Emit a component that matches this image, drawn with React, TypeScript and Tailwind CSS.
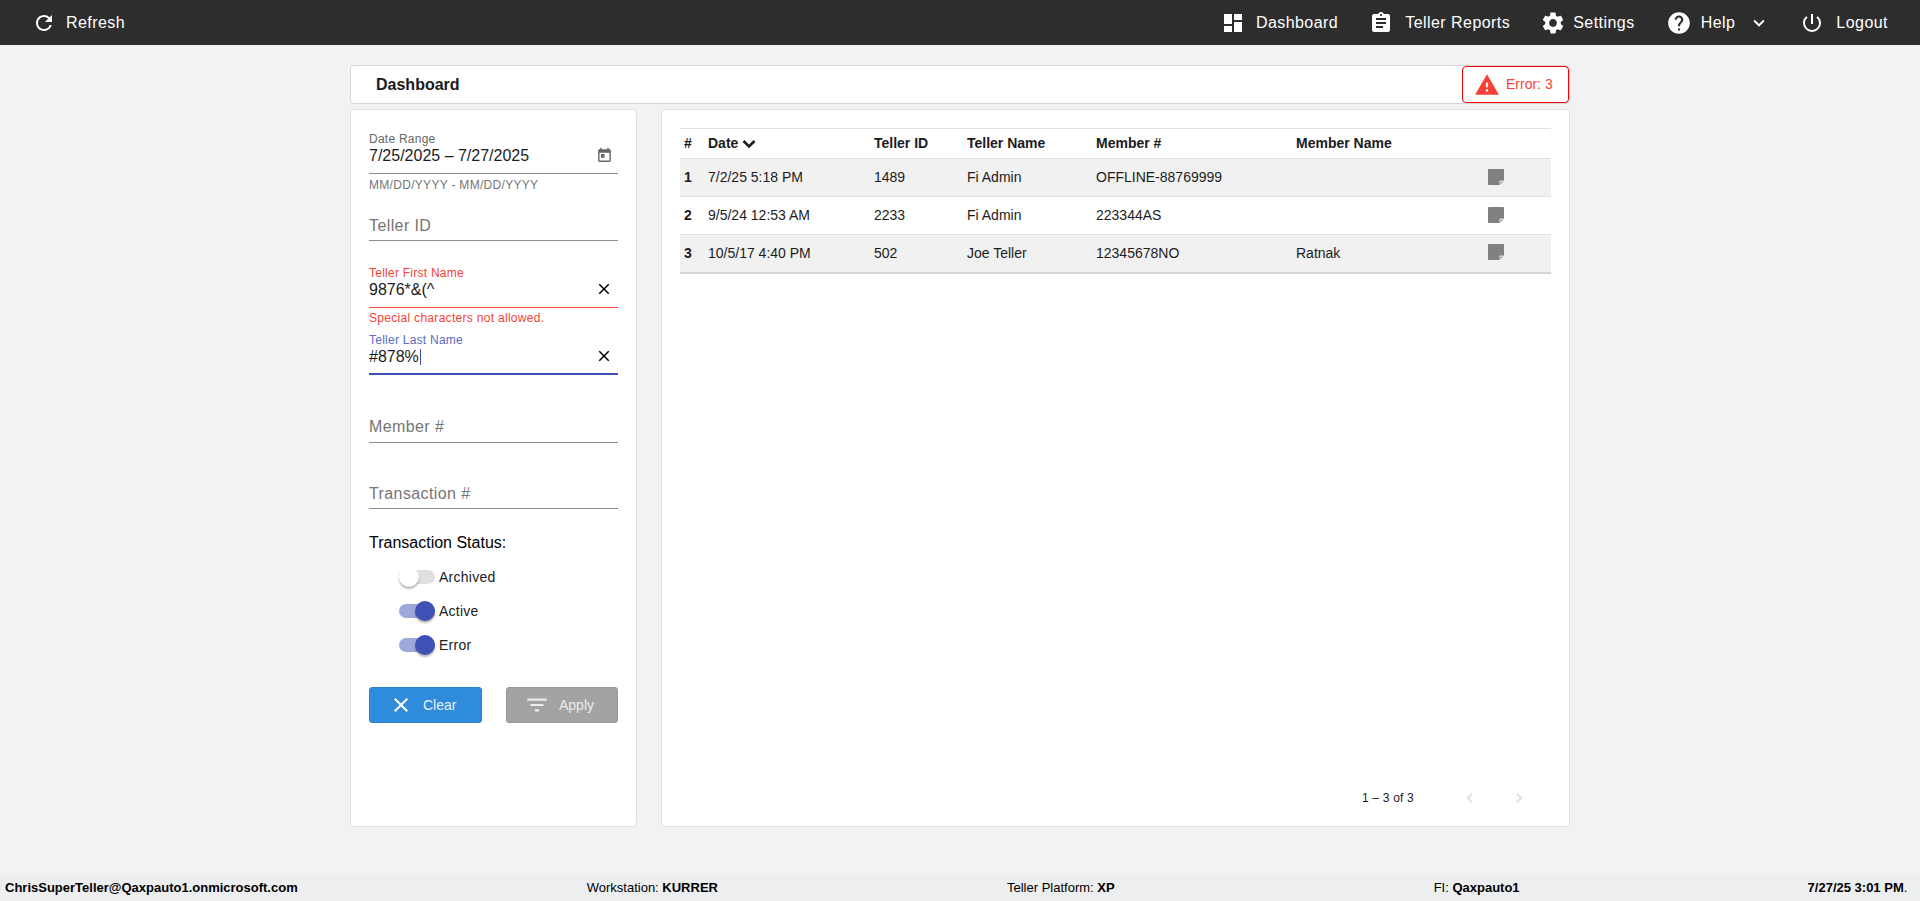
import React from 'react';
import {
  MdRefresh,
  MdDashboard,
  MdAssignment,
  MdSettings,
  MdHelp,
  MdExpandMore,
  MdPowerSettingsNew,
  MdWarning,
  MdToday,
  MdClose,
  MdFilterList,
  MdChevronLeft,
  MdChevronRight,
} from 'react-icons/md';

const ROWS = [
  { n: 1, date: '7/2/25 5:18 PM', id: '1489', teller: 'Fi Admin', member: 'OFFLINE-88769999', name: '' },
  { n: 2, date: '9/5/24 12:53 AM', id: '2233', teller: 'Fi Admin', member: '223344AS', name: '' },
  { n: 3, date: '10/5/17 4:40 PM', id: '502', teller: 'Joe Teller', member: '12345678NO', name: 'Ratnak' },
];

const NoteIcon = () => (
  <svg width="16" height="16" viewBox="0 0 16 16" className="mb-[2px] block">
    <path d="M1 0h14a1 1 0 0 1 1 1v10.5L11.5 16H1a1 1 0 0 1-1-1V1a1 1 0 0 1 1-1z" fill="#808080" />
    <path d="M11.5 16v-4.5H16z" fill="#e8e8e8" />
    <path d="M12.5 15v-2.2h2.2z" fill="#808080" />
  </svg>
);

const NavItem = ({ icon, label, className }: { icon: React.ReactNode; label: string; className: string }) => (
  <div className={`flex items-center ${className}`}>
    {icon}
    <span>{label}</span>
  </div>
);

const PlainField = ({ label, className }: { label: string; className: string }) => (
  <div className={`border-b border-[#8c8c8c] pt-[1px] text-[16px] leading-[20px] tracking-[0.4px] text-[#757575] ${className}`}>
    {label}
  </div>
);

const ValueField = ({
  label,
  value,
  labelColor,
  lineClass,
  caret,
  className,
}: {
  label: string;
  value: string;
  labelColor: string;
  lineClass: string;
  caret?: boolean;
  className: string;
}) => (
  <div className={className}>
    <div className={`text-[12px] leading-[14px] tracking-[0.25px] ${labelColor}`}>{label}</div>
    <div className={`flex items-start justify-between ${lineClass}`}>
      <span className="flex h-[20px] items-center text-[16px] leading-[20px] text-[#1c1c1c]">
        {value}
        {caret && <span className="ml-[1px] inline-block h-[16px] w-[1px] bg-[#3f51b5]" />}
      </span>
      <MdClose size={18} className="mr-[5px] text-black" />
    </div>
  </div>
);

const Toggle = ({ on, label }: { on: boolean; label: string }) => (
  <div className="flex h-[20px] items-center">
    <div className={`relative h-[14px] w-[36px] rounded-full ${on ? 'bg-[#9fa8da]' : 'bg-[#e0e0e0]'}`}>
      <div
        className={`absolute top-[-3px] h-[20px] w-[20px] rounded-full shadow-[0_2px_2px_rgba(0,0,0,0.3)] ${
          on ? 'right-0 bg-[#3f51b5]' : 'left-0 bg-white'
        }`}
      />
    </div>
    <span className="ml-[4px] text-[14px] tracking-[0.25px] text-[#212121]">{label}</span>
  </div>
);

export default function App() {
  return (
    <div className="flex h-[901px] flex-col overflow-hidden bg-[#f2f2f2] font-['Liberation_Sans',Arial,sans-serif] text-black">
      {/* Top bar */}
      <header className="flex h-[45px] shrink-0 items-center bg-[#2d2d2d] text-[16px] tracking-[0.45px] text-white">
        <NavItem icon={<MdRefresh size={24} className="mr-[10px]" />} label="Refresh" className="ml-[32px]" />
        <div className="ml-auto flex items-center">
          <NavItem icon={<MdDashboard size={24} className="mr-[11px]" />} label="Dashboard" className="" />
          <NavItem icon={<MdAssignment size={24} className="mr-[12px]" />} label="Teller Reports" className="ml-[31px]" />
          <NavItem icon={<MdSettings size={26} className="mr-[7px]" />} label="Settings" className="ml-[30px]" />
          <NavItem icon={<MdHelp size={26} className="mr-[9px]" />} label="Help" className="ml-[31px]" />
          <MdExpandMore size={22} className="ml-[13px]" />
          <NavItem icon={<MdPowerSettingsNew size={24} className="mr-[12px]" />} label="Logout" className="ml-[30px] mr-[32px]" />
        </div>
      </header>

      <main className="min-h-0 flex-1">
        <div className="mx-auto w-[1220px] pt-[20px]">
          {/* Title card */}
          <div className="flex h-[39px] items-center justify-between rounded-[4px] border border-[#d6d6d6] bg-white pl-[25px]">
            <h1 className="text-[16px] font-bold text-[#1a1a1a]">Dashboard</h1>
            <div className="flex h-[37px] w-[107px] items-center rounded-[4px] border border-[#f40000] pl-[12px] text-[14px] text-[#f44336]">
              <MdWarning size={26} className="ml-[-1px] mr-[6px] text-[#f44336]" />
              <span>Error: 3</span>
            </div>
          </div>

          <div className="mt-[5px] flex h-[718px] gap-[24px]">
            {/* Filters */}
            <aside className="w-[287px] shrink-0 rounded-[4px] border border-[#e0e0e0] bg-white px-[18px] pt-[23px]">
              <div className="text-[12px] leading-[13px] tracking-[0.25px] text-[#666666]">Date Range</div>
              <div className="flex h-[28px] items-start justify-between border-b border-[#8c8c8c]">
                <span className="text-[16px] leading-[20px] text-[#1c1c1c]">7/25/2025 – 7/27/2025</span>
                <MdToday size={17} className="mr-[5px] mt-[1px] text-[#666666]" />
              </div>
              <div className="mt-[4px] text-[12px] leading-[14px] tracking-[0.3px] text-[#757575]">MM/DD/YYYY - MM/DD/YYYY</div>

              <PlainField label="Teller ID" className="mt-[23px] h-[26px]" />

              <ValueField
                label="Teller First Name"
                value="9876*&(^"
                labelColor="text-[#f44336]"
                lineClass="h-[28px] border-b border-[#f44336]"
                className="mt-[25px]"
              />
              <div className="mt-[3px] text-[12px] leading-[14px] tracking-[0.3px] text-[#f44336]">Special characters not allowed.</div>
              <ValueField
                label="Teller Last Name"
                value="#878%"
                labelColor="text-[#5c6bc0]"
                lineClass="h-[28px] border-b-2 border-[#3f51b5]"
                caret
                className="mt-[8px]"
              />

              <PlainField label="Member #" className="mt-[41px] h-[27px]" />
              <PlainField label="Transaction #" className="mt-[40px] h-[26px]" />

              <div className="mt-[25px] text-[16px] leading-[18px] text-black">Transaction Status:</div>
              <div className="ml-[30px] mt-[15px] flex flex-col gap-[14px]">
                <Toggle on={false} label="Archived" />
                <Toggle on label="Active" />
                <Toggle on label="Error" />
              </div>

              <div className="mt-[32px] flex justify-between">
                <button className="flex h-[36px] w-[113px] items-center rounded-[3px] border border-[#2b82cc] bg-[#2f8cdc] pl-[23px] text-[14px] text-[#e8f2fb]">
                  <MdClose size={24} className="ml-[-4px] mr-[10px] text-white" />
                  Clear
                </button>
                <button className="flex h-[36px] w-[112px] items-center rounded-[3px] border border-[#979797] bg-[#a3a3a3] pl-[19px] text-[14px] text-[#ececec]">
                  <MdFilterList size={26} className="ml-[-2px] mr-[9px] text-[#ececec]" />
                  Apply
                </button>
              </div>
            </aside>

            {/* Results */}
            <section className="flex min-w-0 flex-1 flex-col rounded-[4px] border border-[#e0e0e0] bg-white px-[18px] pt-[18px]">
              <table className="w-[871px] table-fixed border-collapse text-left text-[14px] text-[#1c1c1c]">
                <colgroup>
                  <col className="w-[24px]" />
                  <col className="w-[166px]" />
                  <col className="w-[93px]" />
                  <col className="w-[129px]" />
                  <col className="w-[200px]" />
                  <col className="w-[192px]" />
                  <col />
                </colgroup>
                <thead>
                  <tr className="h-[30px] border-y border-[#e0e0e6] font-bold">
                    <th className="pl-[4px] font-bold">#</th>
                    <th className="pl-[4px] font-bold">
                      <span className="flex items-center">
                        Date
                        <svg width="14" height="10" viewBox="0 0 14 10" className="ml-[4px]">
                          <path d="M1.5 2l5.5 5.5L12.5 2" fill="none" stroke="#1c1c1c" strokeWidth="2.6" />
                        </svg>
                      </span>
                    </th>
                    <th className="pl-[4px] font-bold">Teller ID</th>
                    <th className="pl-[4px] font-bold">Teller Name</th>
                    <th className="pl-[4px] font-bold">Member #</th>
                    <th className="pl-[4px] font-bold">Member Name</th>
                    <th />
                  </tr>
                </thead>
                <tbody>
                  {ROWS.map((row) => (
                    <tr
                      key={row.n}
                      className={`h-[38px] ${row.n % 2 === 1 ? 'bg-[#f1f1f1]' : 'bg-white'} ${
                        row.n === 3 ? 'border-b-2 border-[#d4d4d8]' : 'border-b border-[#e0e0e6]'
                      }`}
                    >
                      <td className="pl-[4px] font-bold">{row.n}</td>
                      <td className="pl-[4px]">{row.date}</td>
                      <td className="pl-[4px]">{row.id}</td>
                      <td className="pl-[4px]">{row.teller}</td>
                      <td className="pl-[4px]">{row.member}</td>
                      <td className="pl-[4px]">{row.name}</td>
                      <td className="pl-[4px]">
                        <NoteIcon />
                      </td>
                    </tr>
                  ))}
                </tbody>
              </table>

              {/* Pagination */}
              <div className="mb-[16px] mr-[22px] mt-auto flex h-[24px] items-center justify-end text-[12px] tracking-[0.2px] text-[#1c1c1c]">
                <span className="mr-[46px]">1 – 3 of 3</span>
                <MdChevronLeft size={20} className="text-[#dcdcdc]" />
                <MdChevronRight size={20} className="ml-[29px] text-[#dcdcdc]" />
              </div>
            </section>
          </div>
        </div>
      </main>

      {/* Status bar */}
      <footer className="flex h-[26px] shrink-0 items-center bg-[#edeef0] pl-[5px] text-[13px] text-black">
        <b>ChrisSuperTeller@Qaxpauto1.onmicrosoft.com</b>
        <span className="ml-[289px]">
          Workstation: <b>KURRER</b>
        </span>
        <span className="ml-[289px]">
          Teller Platform: <b>XP</b>
        </span>
        <span className="ml-[319px]">
          FI: <b>Qaxpauto1</b>
        </span>
        <span className="ml-[288px]">
          <b>7/27/25 3:01 PM</b>.
        </span>
      </footer>
    </div>
  );
}
